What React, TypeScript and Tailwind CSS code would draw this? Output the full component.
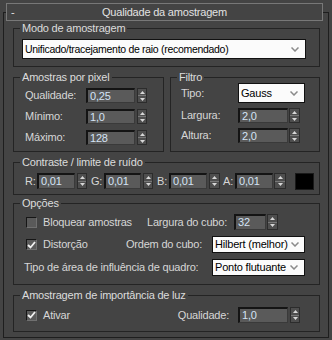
import React from 'react'

const Spinner = ({ w = 'w-[10px]', className = '' }: { w?: string; className?: string }) => (
    <div className={`${w} h-full flex flex-col border border-[#2c2c2c] bg-[#4e4e4e] ${className}`}>
        <div className="flex-1 flex items-center justify-center">
            <svg width="5" height="3" viewBox="0 0 5 3"><path d="M2.5 0 L5 3 L0 3 Z" fill="#d8d8d8" /></svg>
        </div>
        <div className="h-px bg-[#777]" />
        <div className="flex-1 flex items-center justify-center">
            <svg width="5" height="3" viewBox="0 0 5 3"><path d="M0 0 L5 0 L2.5 3 Z" fill="#d8d8d8" /></svg>
        </div>
    </div>
)

const NumInput = ({ value, w }: { value: string; w: string }) => (
    <div className={`${w} h-full flex items-center bg-[#5a5a5a] border-t-2 border-l-2 border-r border-b border-t-[#141414] border-l-[#141414] border-r-[#3a3a3a] border-b-[#3a3a3a] pl-[2px] text-[#d4e3f5] leading-none`}>
        {value}
    </div>
)

const Select = ({ value, w, className = '' }: { value: string; w: string; className?: string }) => (
    <div className={`${w} h-full flex items-center bg-[#fbfbfb] border border-[#111] pl-[2px] pr-[6px] text-black leading-none ${className}`}>
        <span className="flex-1 mr-[3px] whitespace-nowrap">{value}</span>
        <svg width="8" height="5" viewBox="0 0 8 5" className="shrink-0">
            <path d="M0.5 0.5 L4 4 L7.5 0.5" stroke="#8a8a8a" strokeWidth="1.5" fill="none" />
        </svg>
    </div>
)

const Check = ({ checked }: { checked?: boolean }) => (
    <div className="w-[11px] h-[11px] shrink-0 flex items-center justify-center bg-[#5a5a5a] border border-t-[#161616] border-l-[#161616] border-r-[#707070] border-b-[#707070]">
        {checked && (
            <svg width="9" height="8" viewBox="0 0 9 8">
                <path d="M1 4 L3.5 6.5 L8 1" stroke="#f2f2f2" strokeWidth="1.8" fill="none" />
            </svg>
        )}
    </div>
)

const Group = ({ label, className, children }: { label: string; className: string; children?: React.ReactNode }) => (
    <div className={`flex flex-col border border-[#242424] ${className}`}>
        <span className="-mt-[8px] ml-[6px] self-start bg-[#444444] px-[2px] leading-[14px] text-[#dcdcdc]">{label}</span>
        {children}
    </div>
)

export default function App() {
    return (
        <div className="w-[332px] h-[340px] bg-[#444444] pt-[12px] pl-[3px] text-[11px] tracking-[-0.2px] font-['Liberation_Sans',Arial,sans-serif] text-[#d6d6d6]">
            <div className="w-[326px] h-[326px] border border-[#1e1e1e] flex flex-col">
                {/* rollout title */}
                <div className="-mt-[10px] ml-[2px] w-[317px] h-[18px] border border-[#787878] bg-[#444444] grid grid-cols-[1fr_auto_1fr] items-center text-[#e2e2e2]">
                    <span className="pl-[4px] leading-none">-</span>
                    <span className="leading-none">Qualidade da amostragem</span>
                    <span />
                </div>

                <Group label="Modo de amostragem" className="mt-[7px] ml-[9px] w-[307px] h-[39px]">
                    <div className="mt-[4px] ml-[8px] h-[20px] text-[10.5px] tracking-[-0.3px]">
                        <Select value="Unificado/tracejamento de raio (recomendado)" w="w-[284px]" />
                    </div>
                </Group>

                <div className="mt-[10px] ml-[9px] flex gap-[6px]">
                    <Group label="Amostras por pixel" className="w-[151px] h-[75px]">
                        <div className="mt-[4px] pl-[11px] flex flex-col gap-[6px]">
                            {[['Qualidade:', '0,25'], ['Mínimo:', '1,0'], ['Máximo:', '128']].map(([l, v]) => (
                                <div key={l} className="h-[15px] flex items-center">
                                    <span className="w-[61px]">{l}</span>
                                    <NumInput value={v} w="w-[49px]" />
                                    <Spinner className="ml-[2px]" />
                                </div>
                            ))}
                        </div>
                    </Group>
                    <Group label="Filtro" className="w-[150px] h-[75px]">
                        <div className="-mt-[1px] pl-[10px] flex flex-col">
                            <div className="h-[20px] flex items-center">
                                <span className="w-[57px]">Tipo:</span>
                                <Select value="Gauss" w="w-[67px]" />
                            </div>
                            <div className="mt-[5px] h-[15px] flex items-center">
                                <span className="w-[57px]">Largura:</span>
                                <NumInput value="2,0" w="w-[50px]" />
                                <Spinner className="ml-[1px]" w="w-[11px]" />
                            </div>
                            <div className="mt-[5px] h-[15px] flex items-center">
                                <span className="w-[57px]">Altura:</span>
                                <NumInput value="2,0" w="w-[50px]" />
                                <Spinner className="ml-[1px]" w="w-[11px]" />
                            </div>
                        </div>
                    </Group>
                </div>

                <Group label="Contraste / limite de ruído" className="mt-[10px] ml-[9px] w-[307px] h-[33px]">
                    <div className="mt-[4px] pl-[11px] h-[16px] flex items-center">
                        <span className="w-[12px]">R:</span>
                        <NumInput value="0,01" w="w-[38px]" />
                        <Spinner className="ml-[2px]" />
                        <span className="ml-[4px] w-[13px]">G:</span>
                        <NumInput value="0,01" w="w-[37px]" />
                        <Spinner className="ml-[2px]" />
                        <span className="ml-[4px] w-[12px]">B:</span>
                        <NumInput value="0,01" w="w-[38px]" />
                        <Spinner className="ml-[2px]" w="w-[11px]" />
                        <span className="ml-[3px] w-[12px]">A:</span>
                        <NumInput value="0,01" w="w-[38px]" />
                        <Spinner className="ml-[1px]" w="w-[12px]" />
                        <div className="ml-[9px] w-[19px] h-[17px] bg-black border border-[#1a1a1a]" />
                    </div>
                </Group>

                <Group label="Opções" className="mt-[8px] ml-[9px] w-[307px] h-[82px]">
                    <div className="mt-[4px] h-[16px] pl-[12px] flex items-center">
                        <Check />
                        <span className="ml-[6px]">Bloquear amostras</span>
                        <span className="flex-1 text-right">Largura do cubo:</span>
                        <div className="ml-[7px] h-full flex">
                            <NumInput value="32" w="w-[32px]" />
                            <Spinner className="ml-[1px]" w="w-[11px]" />
                        </div>
                        <div className="w-[41px]" />
                    </div>
                    <div className="mt-[6px] h-[17px] pl-[12px] flex items-center">
                        <Check checked />
                        <span className="ml-[6px]">Distorção</span>
                        <span className="flex-1 text-right">Ordem do cubo:</span>
                        <Select value="Hilbert (melhor)" w="w-[93px]" className="ml-[10px] mr-[14px]" />
                    </div>
                    <div className="mt-[6px] h-[17px] pl-[10px] flex items-center">
                        <span className="flex-1">Tipo de área de influência de quadro:</span>
                        <Select value="Ponto flutuante" w="w-[93px]" className="mr-[14px]" />
                    </div>
                </Group>

                <Group label="Amostragem de importância de luz" className="mt-[10px] ml-[9px] w-[307px] h-[37px]">
                    <div className="mt-[5px] h-[16px] pl-[12px] flex items-center">
                        <Check checked />
                        <span className="ml-[6px]">Ativar</span>
                        <span className="flex-1 text-right">Qualidade:</span>
                        <div className="ml-[9px] h-full flex">
                            <NumInput value="1,0" w="w-[50px]" />
                            <Spinner className="ml-[2px]" />
                        </div>
                        <div className="w-[19px]" />
                    </div>
                </Group>
            </div>
        </div>
    )
}
